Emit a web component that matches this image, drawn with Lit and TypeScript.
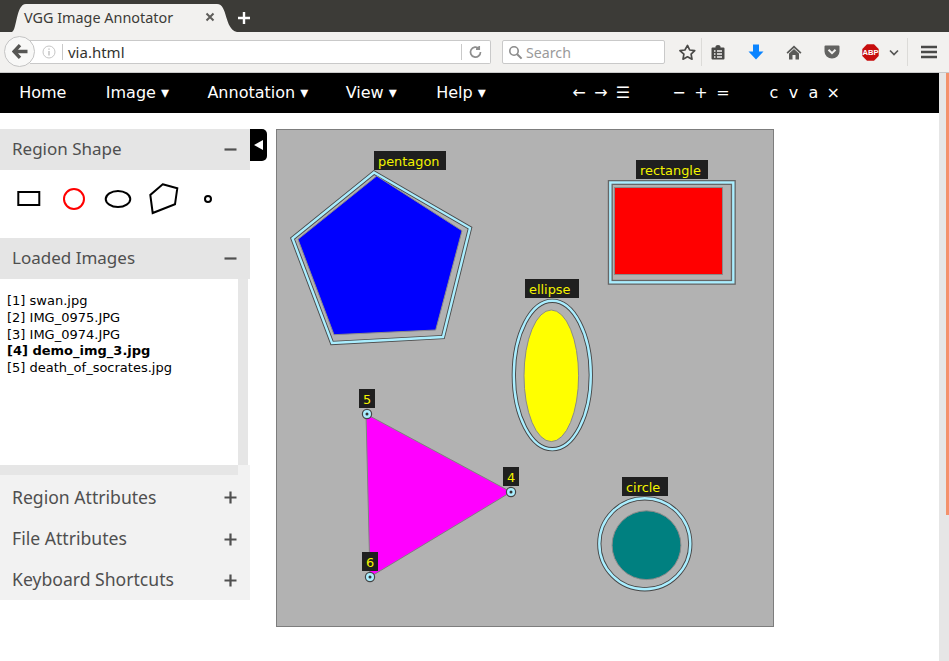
import { LitElement, html, svg, css } from 'lit';
import { customElement } from 'lit/decorators.js';

const MENU = ['Home', 'Image ▾', 'Annotation ▾', 'View ▾', 'Help ▾'];
const IMAGES = ['[1] swan.jpg', '[2] IMG_0975.JPG', '[3] IMG_0974.JPG', '[4] demo_img_3.jpg', '[5] death_of_socrates.jpg'];

const label = (x: number, y: number, w: number, text: string) => svg`
  <rect x=${x} y=${y} width=${w} height="19" fill="#1f1f1f"></rect>
  <text x=${x + 4} y=${y + 15} class="lbl">${text}</text>`;

const ctrl = (x: number, y: number) => svg`
  <circle cx=${x} cy=${y} r="4.6" fill="#aaeeff" stroke="#444" stroke-width="1.2"></circle>
  <circle cx=${x} cy=${y} r="1.5" fill="#333"></circle>`;

@customElement('app-root')
export class AppRoot extends LitElement {
  static styles = css`
    :host {
      display: block;
      width: 949px;
      height: 661px;
      overflow: hidden;
      position: relative;
      background: #fff;
      font-family: 'DejaVu Sans', sans-serif;
    }
    .tabstrip {
      height: 32px;
      background: #3c3b37;
      display: flex;
      align-items: flex-end;
      padding-left: 12px;
    }
    .tab {
      width: 225px;
      height: 28px;
      background: #f2f1ef;
      clip-path: path('M0 28 C5 26 4 0 14 0 L205 0 C216 0 212 25 225 28 Z');
      display: flex;
      align-items: center;
      font: 14.4px 'Noto Sans', sans-serif;
      color: #3c3b37;
      padding: 0 0 2px 12px;
      box-sizing: border-box;
    }
    .tab .name {
      width: 181px;
      white-space: nowrap;
    }
    .tab svg {
      display: block;
    }
    .newtab {
      height: 28px;
      display: flex;
      align-items: center;
    }
    .toolbar {
      height: 40px;
      background: #f2f1ef;
      border-bottom: 1px solid #c9c9c9;
      display: flex;
      align-items: center;
      position: relative;
    }
    .back {
      position: absolute;
      left: 4px;
      top: 4px;
      width: 31px;
      height: 31px;
      box-sizing: border-box;
      border-radius: 50%;
      background: #f8f8f7;
      border: 1px solid #c4c4c4;
      display: flex;
      align-items: center;
      justify-content: center;
    }
    .url {
      margin-left: 30px;
      width: 461px;
      height: 24px;
      box-sizing: border-box;
      background: #fff;
      border: 1px solid #c9c9c9;
      border-left: none;
      border-radius: 0 2px 2px 0;
      display: flex;
      align-items: center;
      padding-left: 11px;
      font: 15px 'Noto Sans', sans-serif;
      color: #33332f;
    }
    .url .sep {
      width: 1px;
      height: 16px;
      background: #c9c9c9;
    }
    .url .addr {
      margin-left: 5px;
      width: 393px;
    }
    .url .refresh {
      margin-left: 4px;
    }
    .search {
      margin-left: 11px;
      width: 163px;
      height: 24px;
      box-sizing: border-box;
      background: #fff;
      border: 1px solid #c9c9c9;
      border-radius: 2px;
      display: flex;
      align-items: center;
      gap: 3px;
      padding-left: 5px;
      font: 14.2px 'Noto Sans', sans-serif;
      color: #9a9a9a;
    }
    .tools {
      display: flex;
      align-items: center;
      margin-left: 14px;
    }
    .tools svg {
      display: block;
      flex: none;
    }
    .tools .vsep {
      width: 1px;
      height: 28px;
      background: #dcdbd8;
    }
    .page {
      display: flex;
      height: 588px;
    }
    .main {
      width: 939px;
    }
    .scrollbar {
      width: 10px;
      background: #e6e6e6;
      display: flex;
      justify-content: flex-end;
    }
    .thumb {
      width: 3px;
      height: 442px;
      background: #f4916b;
    }
    .menubar {
      height: 40px;
      box-sizing: border-box;
      padding-bottom: 2px;
      background: #000;
      color: #fff;
      display: flex;
      align-items: center;
      font-size: 16px;
      white-space: nowrap;
    }
    .menubar .item {
      padding: 0 19.2px;
    }
    /* the original's hinted advances come out a pixel apart in places */
    .menubar .item:nth-child(1) {
      margin-right: 1px;
    }
    .menubar .item:nth-child(3) {
      margin-right: -1px;
    }
    .menubar .item:nth-child(4) {
      margin-right: 1px;
    }
    .glyphs {
      display: flex;
    }
    .glyphs span {
      text-align: center;
      width: 22px;
    }
    .nav {
      margin-left: 63px;
    }
    .zoom {
      margin-left: 34px;
    }
    .sel {
      margin-left: 30px;
    }
    .sel span {
      width: 19.8px;
    }
    .body {
      display: flex;
      padding-top: 16px;
      align-items: flex-start;
    }
    .side {
      width: 250px;
      flex: none;
    }
    .head {
      height: 41px;
      background: #e5e5e5;
      display: flex;
      align-items: center;
      justify-content: space-between;
      padding: 0 12px 2px;
      font: 17px 'Noto Sans', sans-serif;
      color: #4f4f4f;
      box-sizing: border-box;
    }
    .head.closed {
      background: #f2f2f2;
      font-size: 17.6px;
    }
    .head svg {
      display: block;
      margin: 2px 1px 0 0;
    }
    .head.closed svg {
      margin-top: 4px;
    }
    .shapes {
      height: 67px;
      margin-bottom: 1px;
      padding-left: 7px;
      display: flex;
      align-items: flex-start;
      background: #fff;
    }
    .shapes svg {
      width: 44.7px;
      height: 58px;
      display: block;
      flex: none;
    }
    .listwrap {
      display: grid;
      grid-template-columns: 238px 10px 2px;
      grid-template-rows: 186px 10px;
    }
    .list {
      padding: 14px 0 0 7px;
      font-size: 13px;
      line-height: 16.8px;
      color: #000;
      white-space: nowrap;
    }
    .list .cur {
      font-weight: 700;
    }
    .vtrack {
      background: #e6e6e6;
    }
    .htrack {
      background: #e6e6e6;
      grid-column: 1;
    }
    .corner {
      background: #f2f2f2;
      grid-column: 2 / 4;
    }
    .closed.first {
      height: 43px;
      padding-bottom: 0;
    }
    .closed.first svg {
      margin-top: 2px;
    }
    .toggle {
      width: 17px;
      height: 32px;
      background: #000;
      border-radius: 0 5px 5px 0;
      color: #fff;
      display: flex;
      align-items: center;
      justify-content: center;
      flex: none;
    }
    .canvas {
      margin-left: 9px;
      width: 498px;
      height: 498px;
      background: #b2b2b2;
      outline: 1px solid #7d7d7d;
      outline-offset: -1px;
      display: block;
      flex: none;
    }
    .lbl {
      font: 12.9px 'DejaVu Sans', sans-serif;
      fill: #f4f400;
    }
  `;

  private plus() {
    return html`<svg width="13" height="13" viewBox="0 0 13 13"><path d="M6.5 0.5v12M0.5 6.5h12" stroke="#505050" stroke-width="2.2"></path></svg>`;
  }

  private minus() {
    return html`<svg width="13" height="13" viewBox="0 0 13 13"><path d="M0.5 6.5h12" stroke="#505050" stroke-width="2.2"></path></svg>`;
  }

  private chrome() {
    return html`
      <div class="tabstrip">
        <div class="tab">
          <span class="name">VGG Image Annotator</span>
          <svg width="10" height="10" viewBox="0 0 10 10"><path d="M1.5 1.5l7 7M8.5 1.5l-7 7" stroke="#5e5d5a" stroke-width="2"></path></svg>
        </div>
        <div class="newtab">
          <svg width="14" height="14" viewBox="0 0 14 14"><path d="M7 1v12M1 7h12" stroke="#fff" stroke-width="2.4"></path></svg>
        </div>
      </div>
      <div class="toolbar">
        <div class="url">
          <svg width="14" height="14" viewBox="0 0 14 14" style="margin-right:6px;margin-left:1px"><circle cx="7" cy="7" r="6" fill="none" stroke="#c6c6c6" stroke-width="1"></circle><path d="M7 6v4.4M7 3.4v1.4" stroke="#c0c0c0" stroke-width="1.4"></path></svg>
          <span class="sep"></span>
          <span class="addr">via.html</span>
          <span class="sep"></span>
          <svg class="refresh" width="20" height="14" viewBox="0 0 20 14"><path d="M14.5 7a5 5 0 1 1-1.5-3.5M13.2 1v3.2H10" fill="none" stroke="#8e8e8e" stroke-width="1.7"></path></svg>
        </div>
        <div class="search">
          <svg width="15" height="15" viewBox="0 0 15 15"><circle cx="6" cy="6" r="4.2" fill="none" stroke="#8b8b8b" stroke-width="1.6"></circle><path d="M9.2 9.2l4.4 4.4" stroke="#8b8b8b" stroke-width="2"></path></svg>
          <span>Search</span>
        </div>
        <div class="tools">
          <svg width="17" height="17" viewBox="0 0 17 17" style="margin-right:5px"><path d="M8.5 1.4l2.2 4.6 5 .7-3.6 3.5.9 5-4.5-2.4-4.5 2.4.9-5L.9 6.7l5-.7z" fill="none" stroke="#4a4a48" stroke-width="1.7" stroke-linejoin="round"></path></svg>
          <span class="vsep"></span>
          <svg width="14" height="16" viewBox="0 0 14 16" style="margin-left:9px"><path d="M1.5 3.5h3V2.5a2.5 1.5 0 0 1 5 0v1h3a1 1 0 0 1 1 1v10a1 1 0 0 1-1 1h-11a1 1 0 0 1-1-1v-10a1 1 0 0 1 1-1z" fill="#4a4a48"></path><path d="M3 7h1.5M6 7h5M3 10h1.5M6 10h5M3 13h1.5M6 13h5" stroke="#f2f1ef" stroke-width="1.3"></path></svg>
          <svg width="16" height="16" viewBox="0 0 16 16" style="margin-left:23px"><path d="M5 0.5h6v7h4.5L8 15.5.5 7.5H5z" fill="#0a84ff"></path></svg>
          <svg width="16" height="15" viewBox="0 0 16 15" style="margin-left:22px"><path d="M8 0.5L0.5 7.5 1.7 8.8 8 3l6.3 5.8 1.2-1.3z" fill="#5a5a58"></path><path d="M3 8.5L8 4l5 4.5V14.5H9.5V10h-3v4.5H3z" fill="#5a5a58"></path></svg>
          <svg width="16" height="14" viewBox="0 0 16 14" style="margin-left:22px"><path d="M1.5 0.5h13a1 1 0 0 1 1 1V6.5a7.5 7 0 0 1-15 0V1.5a1 1 0 0 1 1-1z" fill="#636361"></path><path d="M4.5 4.8L8 8.2l3.5-3.4" fill="none" stroke="#f2f1ef" stroke-width="2"></path></svg>
          <svg width="17" height="17" viewBox="0 0 17 17" style="margin-left:22px"><path d="M5 0.3h7L16.7 5v7L12 16.7H5L.3 12V5z" fill="#c70d0d"></path><text x="8.5" y="11.2" text-anchor="middle" font-family="'Liberation Sans',sans-serif" font-size="7.6" font-weight="700" fill="#fff">ABP</text></svg>
          <svg width="10" height="7" viewBox="0 0 10 7" style="margin-left:10px"><path d="M1 1.5l4 4 4-4" fill="none" stroke="#565654" stroke-width="1.7"></path></svg>
          <span class="vsep" style="margin-left:8px"></span>
          <svg width="16" height="14" viewBox="0 0 16 14" style="margin-left:13px"><path d="M0 2h16M0 7h16M0 12h16" stroke="#4a4a48" stroke-width="2.4"></path></svg>
        </div>
        <div class="back">
          <svg width="16" height="15" viewBox="0 0 16 15"><path d="M8 1.2L2 7.5l6 6.3M3 7.5H15.5" fill="none" stroke="#565654" stroke-width="3.4"></path></svg>
        </div>
      </div>
    `;
  }

  private menubar() {
    return html`
      <div class="menubar">
        ${MENU.map((m) => html`<span class="item">${m}</span>`)}
        <div class="glyphs nav"><span>←</span><span>→</span><span>☰</span></div>
        <div class="glyphs zoom"><span>−</span><span>+</span><span>=</span></div>
        <div class="glyphs sel"><span>c</span><span>v</span><span>a</span><span>×</span></div>
      </div>
    `;
  }

  private sidebar() {
    return html`
      <div class="side">
        <div class="head"><span>Region Shape</span>${this.minus()}</div>
        <div class="shapes">
          <svg viewBox="0 0 44.7 58"><rect x="11.3" y="22" width="21" height="13" fill="none" stroke="#000" stroke-width="2"></rect></svg>
          <svg viewBox="0 0 44.7 58"><circle cx="22" cy="29" r="10" fill="none" stroke="#f00" stroke-width="2"></circle></svg>
          <svg viewBox="0 0 44.7 58"><ellipse cx="22" cy="29" rx="12.3" ry="8" fill="none" stroke="#000" stroke-width="2"></ellipse></svg>
          <svg viewBox="0 0 44.7 58"><path d="M21.7 14.3L36.3 18.3 34 34.3 11.7 43 9.3 25z" fill="none" stroke="#000" stroke-width="2"></path></svg>
          <svg viewBox="0 0 44.7 58"><circle cx="22" cy="29" r="3" fill="none" stroke="#000" stroke-width="2"></circle></svg>
        </div>
        <div class="head"><span>Loaded Images</span>${this.minus()}</div>
        <div class="listwrap">
          <div class="list">
            ${IMAGES.map((n, i) => html`<div class=${i === 3 ? 'cur' : ''}>${n}</div>`)}
          </div>
          <div class="vtrack"></div>
          <div></div>
          <div class="htrack"></div>
          <div class="corner"></div>
        </div>
        <div class="head closed first"><span>Region Attributes</span>${this.plus()}</div>
        <div class="head closed"><span>File Attributes</span>${this.plus()}</div>
        <div class="head closed"><span>Keyboard Shortcuts</span>${this.plus()}</div>
      </div>
    `;
  }

  private canvas() {
    // viewBox is in page coordinates so the regions read like the original screen positions
    const pentOuter = '374,172.5 470,228 443,337 332,343 292.5,238.5';
    const pentInner = '376.7,176 462,230.7 435.7,330 334,334.7 298,239.3';
    return html`
      <svg class="canvas" viewBox="276 129 498 498">
        <polygon points=${pentOuter} fill="none" stroke="#4a4a4a" stroke-width="4.2"></polygon>
        <polygon points=${pentOuter} fill="none" stroke="#aaeeff" stroke-width="2.4"></polygon>
        <polygon points=${pentInner} fill="#0000ff" stroke="#8a8a8a" stroke-width="1"></polygon>
        ${label(374, 151, 72, 'pentagon')}

        <rect x="610.3" y="182.5" width="123" height="99.8" fill="none" stroke="#666" stroke-width="5"></rect>
        <rect x="610.3" y="182.5" width="123" height="99.8" fill="none" stroke="#aaeeff" stroke-width="2.4"></rect>
        <rect x="614.5" y="187.5" width="108" height="87" fill="#f00" stroke="#8a8a8a" stroke-width="1"></rect>
        ${label(636, 160, 72, 'rectangle')}

        <ellipse cx="552.3" cy="375" rx="38.5" ry="74.2" fill="none" stroke="#444" stroke-width="4.2"></ellipse>
        <ellipse cx="552.3" cy="375" rx="38.5" ry="74.2" fill="none" stroke="#aaeeff" stroke-width="2.4"></ellipse>
        <ellipse cx="551.3" cy="375.8" rx="27.3" ry="65.8" fill="#ff0" stroke="#8a8a8a" stroke-width="1"></ellipse>
        ${label(525, 279, 54, 'ellipse')}

        <polygon points="366,414 511,492 370,577" fill="#f0f" stroke="#808080" stroke-width="1"></polygon>
        ${ctrl(367, 414)}${ctrl(511, 492)}${ctrl(370, 577)}
        ${label(359, 389, 16, '5')}
        ${label(503, 467, 16, '4')}
        ${label(362, 552, 16, '6')}

        <circle cx="644.8" cy="543.8" r="45.5" fill="none" stroke="#444" stroke-width="4.2"></circle>
        <circle cx="644.8" cy="543.8" r="45.5" fill="none" stroke="#aaeeff" stroke-width="2.4"></circle>
        <circle cx="646.5" cy="545.2" r="34.4" fill="#008080" stroke="#8a8a8a" stroke-width="1"></circle>
        ${label(622, 477, 46, 'circle')}
      </svg>
    `;
  }

  render() {
    return html`
      ${this.chrome()}
      <div class="page">
        <div class="main">
          ${this.menubar()}
          <div class="body">
            ${this.sidebar()}
            <div class="toggle"><svg width="9" height="10" viewBox="0 0 9 10"><path d="M9 0v10L0 5z" fill="#fff"></path></svg></div>
            ${this.canvas()}
          </div>
        </div>
        <div class="scrollbar"><div class="thumb"></div></div>
      </div>
    `;
  }
}
